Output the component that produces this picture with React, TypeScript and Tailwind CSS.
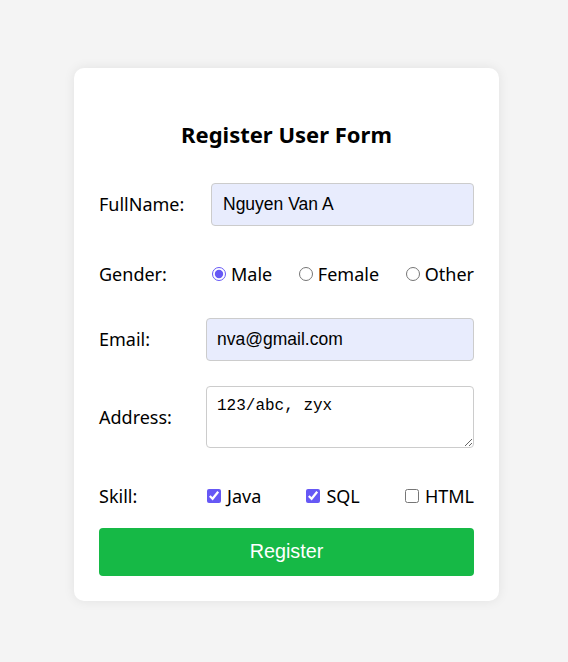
import { useState } from "react";

const label = "text-[18px] text-black";

export default function App() {
  const [gender, setGender] = useState("male");
  const [skills, setSkills] = useState<string[]>(["java", "sql"]);

  const toggleSkill = (s: string) =>
    setSkills((prev) => (prev.includes(s) ? prev.filter((x) => x !== s) : [...prev, s]));

  return (
    <div className="min-h-[662px] bg-[#f4f4f4] pt-[68px] font-['Noto_Sans',sans-serif]">
      <form
        onSubmit={(e) => e.preventDefault()}
        className="ml-[74px] w-[425px] rounded-[10px] bg-white px-[25px] pt-[25px] pb-[25px] shadow-[0_0_12px_rgba(0,0,0,0.08)]"
      >
        <h2 className="mt-[26px] mb-[34px] h-[30px] text-center text-[22px] leading-[30px] font-bold">
          Register User Form
        </h2>

        {/* full name */}
        <div className="flex h-[43px] items-center">
          <label className={`${label} w-[112px]`}>FullName:</label>
          <input
            type="text"
            defaultValue="Nguyen Van A"
            className="h-[43px] flex-1 rounded-[4px] border border-[#ccc] bg-[#e8ecfd] pl-[11px] font-['Liberation_Sans',Arial,sans-serif] text-[17.5px] text-black outline-none"
          />
        </div>

        {/* gender */}
        <div className="mt-[24px] flex h-[48px] items-center">
          <span className={`${label} w-[108px]`}>Gender:</span>
          <div className="flex flex-1 items-center justify-between">
            {["Male", "Female", "Other"].map((g) => (
              <label key={g} className={`${label} flex items-center`}>
                <input
                  type="radio"
                  name="gender"
                  checked={gender === g.toLowerCase()}
                  onChange={() => setGender(g.toLowerCase())}
                  className="ml-[5px] mr-[5px] h-[14px] w-[14px] accent-[#6658f5]"
                />
                {g}
              </label>
            ))}
          </div>
        </div>

        {/* email */}
        <div className="mt-[20px] flex h-[43px] items-center">
          <label className={`${label} w-[107px]`}>Email:</label>
          <input
            type="email"
            defaultValue="nva@gmail.com"
            className="h-[43px] flex-1 rounded-[4px] border border-[#ccc] bg-[#e8ecfd] pl-[10px] font-['Liberation_Sans',Arial,sans-serif] text-[17.5px] text-black outline-none"
          />
        </div>

        {/* address */}
        <div className="mt-[25px] flex h-[62px] items-center">
          <label className={`${label} w-[107px]`}>Address:</label>
          <textarea
            defaultValue="123/abc, zyx"
            className="h-[62px] flex-1 rounded-[4px] border border-[#ccc] bg-white px-[10px] pt-[8px] font-['Liberation_Mono',monospace] text-[16px] leading-[22px] text-black outline-none"
          />
        </div>

        {/* skill */}
        <div className="mt-[25px] flex h-[46px] items-center">
          <span className={`${label} w-[104px]`}>Skill:</span>
          <div className="flex flex-1 items-center justify-between">
            {["Java", "SQL", "HTML"].map((s) => (
              <label key={s} className={`${label} flex items-center`}>
                <input
                  type="checkbox"
                  checked={skills.includes(s.toLowerCase())}
                  onChange={() => toggleSkill(s.toLowerCase())}
                  className="ml-[4px] mr-[6px] h-[14px] w-[14px] accent-[#6658f5]"
                />
                {s}
              </label>
            ))}
          </div>
        </div>

        <button
          type="submit"
          className="mt-[9px] h-[48px] w-full rounded-[4px] bg-[#16b946] font-['Liberation_Sans',Arial,sans-serif] text-[19.8px] text-white"
        >
          Register
        </button>
      </form>
    </div>
  );
}
